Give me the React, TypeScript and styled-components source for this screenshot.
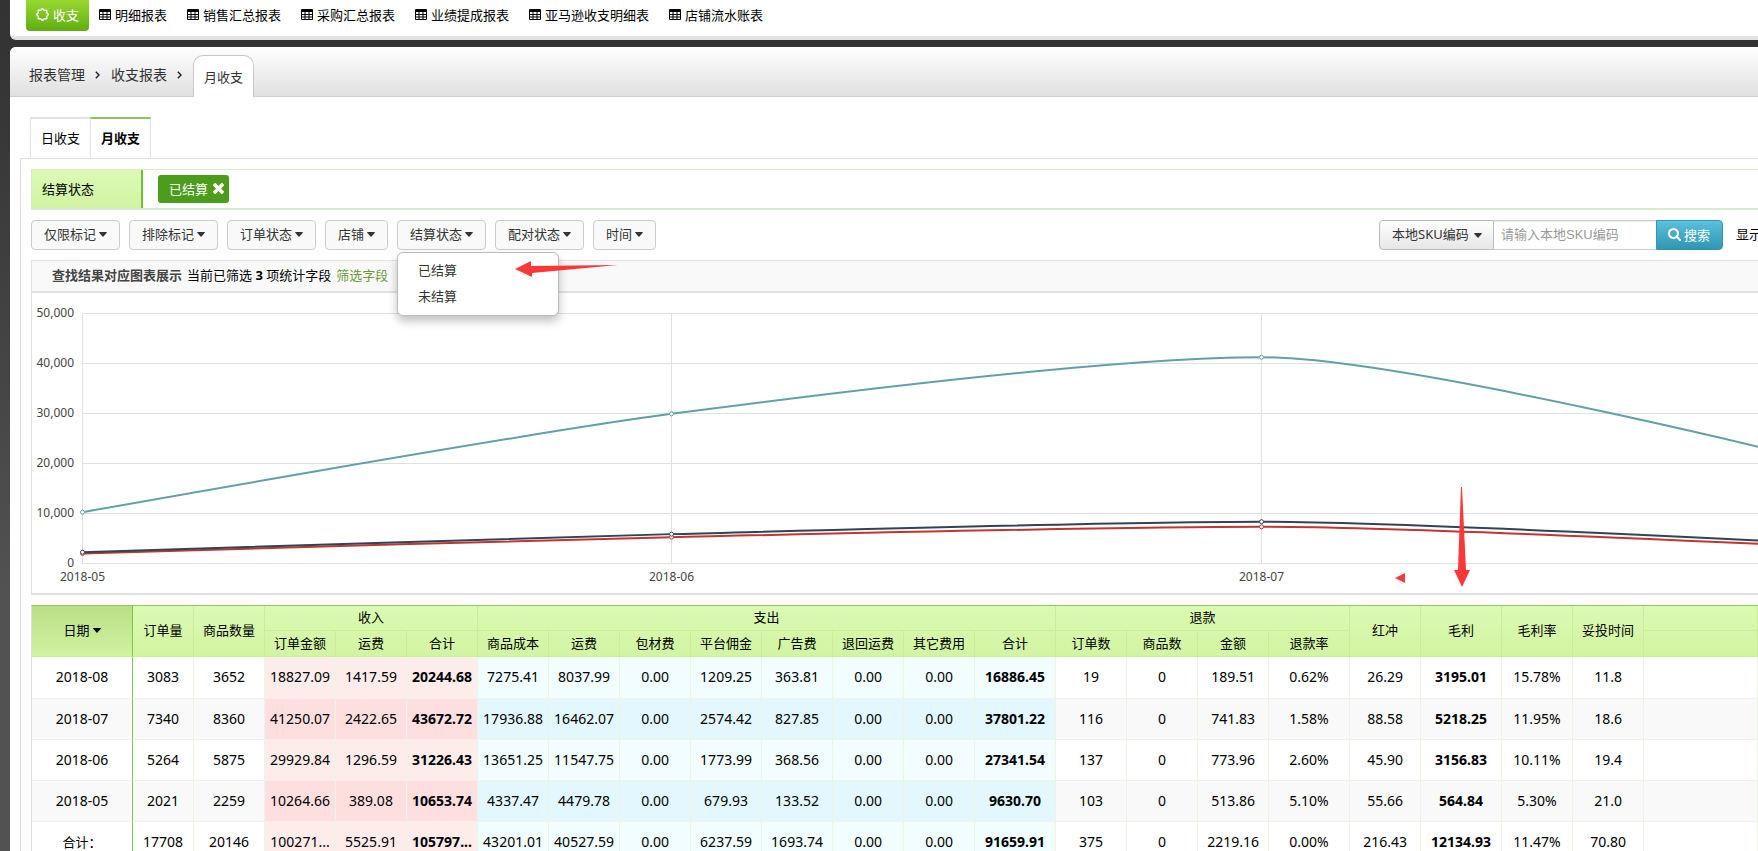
import React from 'react';
import styled, { createGlobalStyle, css } from 'styled-components';

const GlobalStyle = createGlobalStyle`
  * { box-sizing: border-box; }
  body {
    margin: 0;
    overflow: hidden;
    color: #000;
    font: 13px/20px "Noto Sans", "Noto Sans CJK SC", sans-serif;
  }
  a { color: inherit; text-decoration: none; }
  button, input, select { font: inherit; color: inherit; margin: 0; }
`;

const Page = styled.div`
  display: flex;
  flex-direction: column;
  gap: 7px;
  height: 100vh;
  padding-left: 10px;
  overflow: hidden;
  background: linear-gradient(#333 0, #353535 80px, #525252 600px);
`;

const TopBar = styled.nav`
  display: flex;
  flex: none;
  align-items: flex-start;
  gap: 20px;
  height: 40px;
  padding-left: 16px;
  background: #fff;
  border-bottom: 4px solid #e2e2e2;
  border-bottom-left-radius: 6px;
`;

const NavMain = styled.a`
  display: flex;
  align-items: center;
  gap: 4px;
  height: 31px;
  margin-right: -10px;
  padding: 0 10px 2px;
  color: #fff;
  background: linear-gradient(#98d830, #5fae14);
  border-radius: 0 0 4px 4px;
`;

const NavItem = styled.a`
  display: flex;
  align-items: center;
  gap: 4px;
  height: 29px;
  white-space: nowrap;
`;

const Panel = styled.main`
  display: flex;
  flex: 1;
  flex-direction: column;
  min-height: 0;
  background: #fff;
  border-top-left-radius: 6px;
`;

const Crumbs = styled.nav`
  display: flex;
  flex: none;
  align-items: flex-end;
  height: 50px;
  padding-left: 19px;
  color: #333;
  background: linear-gradient(#fff, #e0e0e0);
  border-bottom: 1px solid #d0d0d0;
  border-top-left-radius: 6px;
`;

const Crumb = styled.a`
  display: flex;
  align-items: center;
  gap: 10px;
  height: 42px;
  margin-right: 11px;
  font-size: 14px;
`;

const CurrentCrumb = styled.span`
  height: 42px;
  margin-bottom: -1px;
  padding: 0 10px;
  line-height: 43px;
  background: #fff;
  border: 1px solid #c8c8c8;
  border-bottom: 0;
  border-radius: 10px 10px 0 0;
`;

const Tabs = styled.div`
  display: flex;
  flex: none;
  margin: 20px 0 -1px 20px;
`;

const Tab = styled.button<{ $active?: boolean }>`
  height: 42px;
  padding: 0 10px 2px;
  font-weight: ${p => (p.$active ? 700 : 400)};
  background: #fff;
  border: solid #e2e2e2;
  border-width: 2px ${p => (p.$active ? 1 : 0)}px ${p => (p.$active ? 0 : 1)}px 1px;
  border-top-color: ${p => (p.$active ? '#8fc45c' : '#e2e2e2')};
`;

const Content = styled.section`
  display: flex;
  flex: 1;
  flex-direction: column;
  gap: 10px;
  margin-left: 10px;
  padding: 10px 0 0 10px;
  border: solid #e0e0e0;
  border-width: 1px 0 0 1px;
`;

const Conditions = styled.div`
  display: flex;
  flex: none;
  align-items: stretch;
  height: 41px;
  border: solid #d9ebcb;
  border-width: 1px 0 2px 1px;
`;

const ConditionName = styled.span`
  width: 111px;
  padding-left: 10px;
  line-height: 38px;
  background: linear-gradient(#dcf9b4, #d1f4a3);
  border-right: 2px solid #6cc233;
`;

const Chip = styled.button`
  display: flex;
  align-self: center;
  align-items: center;
  gap: 5px;
  height: 28px;
  margin-left: 15px;
  padding: 0 5px 1px 11px;
  color: #fff;
  background: #4c9d1b;
  border: 0;
  border-radius: 3px;
`;

const Toolbar = styled.div`
  display: flex;
  flex: none;
  gap: 9px;
  height: 30px;
`;

const FilterWrap = styled.div`
  position: relative;
`;

const FilterButton = styled.button`
  display: flex;
  align-items: center;
  gap: 3px;
  height: 30px;
  padding: 0 12px 2px;
  color: #333;
  white-space: nowrap;
  background: #f9f9f9;
  border: 1px solid #ccc;
  border-radius: 4px;
`;

const Menu = styled.ul`
  position: absolute;
  top: 32px;
  left: 0;
  z-index: 2;
  width: 162px;
  margin: 0;
  padding: 5px 0;
  color: #333;
  list-style: none;
  background: #fff;
  border: 1px solid #bbb;
  border-radius: 6px;
  box-shadow: 0 5px 10px rgba(0, 0, 0, 0.25);
`;

const MenuLink = styled.a`
  display: block;
  padding: 2px 20px 4px;
`;

const MenuArrow = styled.svg`
  position: absolute;
  top: 40px;
  left: 118px;
  z-index: 3;
`;

const Search = styled.form`
  display: flex;
  margin-left: auto;
`;

const SelectWrap = styled.label`
  position: relative;
  display: flex;
  color: #333;
`;

const SelectField = styled.select`
  width: 115px;
  height: 30px;
  padding: 0 12px 2px;
  appearance: none;
  background: linear-gradient(#fff, #e6e6e6);
  border: 1px solid #bbb;
  border-radius: 4px 0 0 4px;
`;

const SelectCaret = styled.span`
  position: absolute;
  top: 0;
  right: 12px;
  display: flex;
  align-items: center;
  height: 30px;
  pointer-events: none;
`;

const SearchInput = styled.input`
  width: 162px;
  height: 30px;
  padding: 0 7px 1px;
  font-family: "Liberation Sans", "Noto Sans CJK SC", sans-serif;
  border: solid #ccc;
  border-width: 1px 0;
  box-shadow: inset 0 1px 1px rgba(0, 0, 0, 0.08);
  &::placeholder { color: #999; }
`;

const SearchButton = styled.button`
  display: flex;
  align-items: center;
  gap: 3px;
  width: 67px;
  height: 30px;
  padding: 0 11px 1px;
  color: #fff;
  white-space: nowrap;
  background: linear-gradient(#5bc0de, #2f96b4);
  border: 1px solid #2f96b4;
  border-radius: 0 4px 4px 0;
`;

const ShowLabel = styled.span`
  width: 22px;
  margin-left: 4px;
  line-height: 28px;
  white-space: nowrap;
`;

const ChartBox = styled.section`
  flex: none;
  border: solid #e0e0e0;
  border-width: 1px 0 2px 1px;
`;

const ChartTitle = styled.header`
  display: flex;
  gap: 5px;
  height: 32px;
  padding-left: 20px;
  line-height: 29px;
  background: #f9f9f9;
  border-bottom: 2px solid #e0e0e0;
`;

const ChartHeading = styled.h2`
  margin: 0;
  color: #444;
  font-size: 13px;
  font-weight: 700;
`;

const FieldLink = styled.a`
  color: #6b9a3a;
`;

const Plot = styled.svg`
  display: block;
  width: 100%;
  height: 300px;
  font-size: 12px;
`;

const TableBox = styled.div`
  flex: none;
  border: solid #ddd;
  border-width: 1px 0 0 1px;
  border-top-color: #8fc95c;
`;

const Table = styled.table`
  width: 100%;
  table-layout: fixed;
  border-collapse: separate;
  border-spacing: 0;
`;

const Col = styled.col<{ $w?: number }>`
  width: ${p => (p.$w ? `${p.$w}px` : 'auto')};
`;

const Head = styled.thead`
  background: linear-gradient(#dcfab2, #d1f4a2);
`;

const HeadRow = styled.tr<{ $h: number }>`
  height: ${p => p.$h}px;
`;

const Th = styled.th<{ $date?: boolean }>`
  padding: 0 0 2px;
  font-weight: 400;
  white-space: nowrap;
  border: solid #c8ee9a;
  border-width: 0 1px 1px 0;
  ${p =>
    p.$date &&
    css`
      background: linear-gradient(#b9df86, #d0f2a2);
      border-right-color: #86c24e;
    `}
`;

const SortButton = styled.button`
  display: inline-flex;
  align-items: center;
  gap: 3px;
  padding: 0;
  background: none;
  border: 0;
`;

type Tone = 'plain' | 'income' | 'cost';
const toneColors: Record<Tone, [string, string]> = {
  plain: ['#fff', '#f9f9f9'],
  income: ['#feeceb', '#fddfe0'],
  cost: ['#f1fdff', '#e2f8fe'],
};

const Row = styled.tr`
  height: 41px;
  &:first-child { height: 42px; }
`;

const Td = styled.td<{ $tone: Tone; $odd: boolean; $bold?: boolean; $date?: boolean; $last?: boolean }>`
  padding: 0 0 1px;
  overflow: hidden;
  font-size: ${p => (p.$last && p.$date ? 13 : 14)}px;
  font-weight: ${p => (p.$bold ? 700 : 400)};
  text-align: center;
  white-space: nowrap;
  background: ${p => toneColors[p.$tone][p.$odd ? 1 : 0]};
  border: solid #eef4e3;
  border-width: 0 1px 1px 0;
  ${p => p.$date && css`border-right-color: #86c24e;`}
`;

const Caret = () => (
  <svg width="8" height="5" viewBox="0 0 8 5" aria-hidden="true">
    <path d="M.6 0h6.8q.6.1.4.8L4.5 4.6q-.5.4-1 0L.2.8Q0 .1.6 0z" fill="currentColor" />
  </svg>
);

const GridIcon = () => (
  <svg width="12" height="11" viewBox="0 0 12 11" aria-hidden="true">
    <path
      fillRule="evenodd"
      fill="currentColor"
      d="M1 0h10q1 0 1 1v9q0 1-1 1H1q-1 0-1-1V1q0-1 1-1zM1 3v2h2.500V3zM4.500 3v2h3V3zM8.500 3v2H11V3zM1 6v1.500h2.500V6zM4.500 6v1.500h3V6zM8.500 6v1.500H11V6zM1 8.500V10h2.500V8.500zM4.500 8.500V10h3V8.500zM8.500 8.500V10H11V8.500z"
    />
  </svg>
);

const starPoints = Array.from({ length: 16 }, (_, i) => {
  const r = i % 2 ? 4.6 : 6.1;
  const a = (i * Math.PI) / 8 - Math.PI / 2;
  return `${6.5 + r * Math.cos(a)},${6.5 + r * Math.sin(a)}`;
}).join(' ');

const SunIcon = () => (
  <svg width="13" height="13" viewBox="0 0 13 13" aria-hidden="true">
    <polygon points={starPoints} fill="none" stroke="currentColor" strokeWidth="1.3" strokeLinejoin="round" />
  </svg>
);

const CloseIcon = () => (
  <svg width="11" height="11" viewBox="302 366 1188 1188" aria-hidden="true">
    <path
      fill="currentColor"
      d="M1490 1322q0 40-28 68l-136 136q-28 28-68 28t-68-28l-294-294-294 294q-28 28-68 28t-68-28l-136-136q-28-28-28-68t28-68l294-294-294-294q-28-28-28-68t28-68l136-136q28-28 68-28t68 28l294 294 294-294q28-28 68-28t68 28l136 136q28 28 28 68t-28 68l-294 294 294 294q28 28 28 68z"
    />
  </svg>
);

const SearchIcon = () => (
  <svg width="13" height="13" viewBox="64 128 1664 1664" aria-hidden="true">
    <path
      fill="currentColor"
      d="M1216 832q0-185-131.500-316.500t-316.500-131.500-316.500 131.500-131.500 316.500 131.500 316.500 316.500 131.500 316.500-131.500 131.500-316.500zm512 832q0 52-38 90t-90 38q-54 0-90-38l-343-342q-179 124-399 124-143 0-273.500-55.500t-225-150-150-225-55.500-273.500 55.500-273.500 150-225 225-150 273.500-55.500 273.500 55.500 225 150 150 225 55.500 273.500q0 220-124 399l343 343q37 37 37 90z"
    />
  </svg>
);

const Chevron = () => (
  <svg width="5" height="8" viewBox="0 0 5 8" aria-hidden="true">
    <path d="M.8.700L4 4 .8 7.300" fill="none" stroke="#222" strokeWidth="1.400" />
  </svg>
);

const navItems = ['明细报表', '销售汇总报表', '采购汇总报表', '业绩提成报表', '亚马逊收支明细表', '店铺流水账表'];
const filters = ['仅限标记', '排除标记', '订单状态', '店铺', '结算状态', '配对状态', '时间'];

const months = ['2018-05', '2018-06', '2018-07'];
const series = [
  { color: '#c23531', values: [2021, 5264, 7340, 3083] },
  { color: '#2f4554', values: [2259, 5875, 8360, 3652] },
  { color: '#61a0a8', values: [10264.66, 29929.84, 41250.07, 18827.09] },
];
const xAt = (i: number) => Math.floor(50 + i * 589.5) + 0.5;
const yAt = (v: number) => 270.5 - v / 200;

/* Cubic segments whose tangents are flat at each series' own extremes. */
function smoothPath(values: number[]) {
  const n = values.length;
  const pts = values.map((v, i) => [xAt(i), yAt(v)]);
  const reach = 147;
  const slope = pts.map((p, i) => {
    if (i === 0 || i === n - 1) return 0;
    const a = pts[i - 1][1];
    const b = pts[i + 1][1];
    return (p[1] - a) * (b - p[1]) > 0 ? (b - a) / 8 : 0;
  });
  let d = `M${pts[0][0]} ${pts[0][1]}`;
  for (let i = 1; i < n; i++) {
    const [x0, y0] = pts[i - 1];
    const [x1, y1] = pts[i];
    const c0 = i === 1 ? x0 : x0 + reach;
    const c1 = i === n - 1 ? x1 : x1 - reach;
    d += `C${c0} ${y0 + slope[i - 1]} ${c1} ${y1 - slope[i]} ${x1} ${y1}`;
  }
  return d;
}

const Chart = () => (
  <Plot role="img" aria-label="月收支图表">
    {[0, 10000, 20000, 30000, 40000, 50000].map(v => (
      <g key={v}>
        <line x1="50" x2="100%" y1={yAt(v)} y2={yAt(v)} stroke="#e0e0e0" />
        <text x="42" y={yAt(v) + 3} textAnchor="end" fill="#444">
          {v.toLocaleString('en-US')}
        </text>
      </g>
    ))}
    {months.map((m, i) => (
      <g key={m}>
        <line x1={xAt(i)} x2={xAt(i)} y1="20" y2="271" stroke="#e0e0e0" />
        <text x={xAt(i)} y="288" textAnchor="middle" fill="#444">
          {m}
        </text>
      </g>
    ))}
    {series.map(s => (
      <g key={s.color} stroke={s.color}>
        <path d={smoothPath(s.values)} fill="none" strokeWidth="2" />
        {s.values.map((v, i) => (
          <circle key={i} cx={xAt(i)} cy={yAt(v)} r="2" fill="#fff" />
        ))}
      </g>
    ))}
    <g fill="#fb3737">
      <path d="M1429 194l1 0 4 83h4l-8 17-8-17h4z" />
      <path d="M1363 285l10-5v10z" />
    </g>
  </Plot>
);

const colWidths = [101, 61, 71, 71, 71, 71, 71, 71, 71, 71, 71, 71, 71, 81, 71, 71, 71, 81, 71, 81, 71, 71];
const subHeads = [
  '订单金额', '运费', '合计',
  '商品成本', '运费', '包材费', '平台佣金', '广告费', '退回运费', '其它费用', '合计',
  '订单数', '商品数', '金额', '退款率',
];
const rows = [
  '2018-08 3083 3652 18827.09 1417.59 20244.68 7275.41 8037.99 0.00 1209.25 363.81 0.00 0.00 16886.45 19 0 189.51 0.62% 26.29 3195.01 15.78% 11.8',
  '2018-07 7340 8360 41250.07 2422.65 43672.72 17936.88 16462.07 0.00 2574.42 827.85 0.00 0.00 37801.22 116 0 741.83 1.58% 88.58 5218.25 11.95% 18.6',
  '2018-06 5264 5875 29929.84 1296.59 31226.43 13651.25 11547.75 0.00 1773.99 368.56 0.00 0.00 27341.54 137 0 773.96 2.60% 45.90 3156.83 10.11% 19.4',
  '2018-05 2021 2259 10264.66 389.08 10653.74 4337.47 4479.78 0.00 679.93 133.52 0.00 0.00 9630.70 103 0 513.86 5.10% 55.66 564.84 5.30% 21.0',
  '合计： 17708 20146 100271... 5525.91 105797... 43201.01 40527.59 0.00 6237.59 1693.74 0.00 0.00 91659.91 375 0 2219.16 0.00% 216.43 12134.93 11.47% 70.80',
].map(r => r.split(' '));
const boldCols = [5, 13, 19];
const toneOf = (c: number): Tone => (c >= 3 && c <= 5 ? 'income' : c >= 6 && c <= 13 ? 'cost' : 'plain');

const ReportTable = () => (
  <TableBox>
    <Table>
      <colgroup>
        {colWidths.map((w, i) => (
          <Col key={i} $w={w} />
        ))}
        <Col />
      </colgroup>
      <Head>
        <HeadRow $h={25}>
          <Th rowSpan={2} $date>
            <SortButton type="button">
              日期
              <Caret />
            </SortButton>
          </Th>
          <Th rowSpan={2}>订单量</Th>
          <Th rowSpan={2}>商品数量</Th>
          <Th colSpan={3}>收入</Th>
          <Th colSpan={8}>支出</Th>
          <Th colSpan={4}>退款</Th>
          <Th rowSpan={2}>红冲</Th>
          <Th rowSpan={2}>毛利</Th>
          <Th rowSpan={2}>毛利率</Th>
          <Th rowSpan={2}>妥投时间</Th>
          <Th />
        </HeadRow>
        <HeadRow $h={26}>
          {subHeads.map((h, i) => (
            <Th key={i}>{h}</Th>
          ))}
          <Th />
        </HeadRow>
      </Head>
      <tbody>
        {rows.map((r, ri) => (
          <Row key={r[0]}>
            {r.map((v, c) => (
              <Td
                key={c}
                $tone={toneOf(c)}
                $odd={ri % 2 === 1}
                $bold={boldCols.includes(c)}
                $date={c === 0}
                $last={ri === rows.length - 1}
              >
                {v}
              </Td>
            ))}
            <Td $tone="plain" $odd={ri % 2 === 1} />
          </Row>
        ))}
      </tbody>
    </Table>
  </TableBox>
);

export default function App() {
  return (
    <>
      <GlobalStyle />
      <Page>
        <TopBar>
          <NavMain href="#balance">
            <SunIcon />
            收支
          </NavMain>
          {navItems.map(n => (
            <NavItem key={n} href="#report">
              <GridIcon />
              {n}
            </NavItem>
          ))}
        </TopBar>
        <Panel>
          <Crumbs>
            {['报表管理', '收支报表'].map(c => (
              <Crumb key={c} href="#crumb">
                {c}
                <Chevron />
              </Crumb>
            ))}
            <CurrentCrumb>月收支</CurrentCrumb>
          </Crumbs>
          <Tabs>
            <Tab type="button">日收支</Tab>
            <Tab type="button" $active>
              月收支
            </Tab>
          </Tabs>
          <Content>
            <Conditions>
              <ConditionName>结算状态</ConditionName>
              <Chip type="button">
                已结算
                <CloseIcon />
              </Chip>
            </Conditions>
            <Toolbar>
              {filters.map(f => (
                <FilterWrap key={f}>
                  <FilterButton type="button" aria-haspopup="menu">
                    {f}
                    <Caret />
                  </FilterButton>
                  {f === '结算状态' && (
                    <>
                      <Menu>
                        <li>
                          <MenuLink href="#settled">已结算</MenuLink>
                        </li>
                        <li>
                          <MenuLink href="#unsettled">未结算</MenuLink>
                        </li>
                      </Menu>
                      <MenuArrow width="104" height="18" viewBox="0 0 104 18" aria-hidden="true">
                        <path d="M0 9L16 1v5l87-1L17 13v4z" fill="#fb3737" />
                      </MenuArrow>
                    </>
                  )}
                </FilterWrap>
              ))}
              <Search>
                <SelectWrap>
                  <SelectField aria-label="搜索类型">
                    <option>本地SKU编码</option>
                  </SelectField>
                  <SelectCaret>
                    <Caret />
                  </SelectCaret>
                </SelectWrap>
                <SearchInput aria-label="搜索" placeholder="请输入本地SKU编码" />
                <SearchButton type="button">
                  <SearchIcon />
                  搜索
                </SearchButton>
              </Search>
              <ShowLabel>显示</ShowLabel>
            </Toolbar>
            <ChartBox>
              <ChartTitle>
                <ChartHeading>查找结果对应图表展示</ChartHeading>
                <span>
                  当前已筛选 <b>3</b> 项统计字段
                </span>
                <FieldLink href="#fields">筛选字段</FieldLink>
              </ChartTitle>
              <Chart />
            </ChartBox>
            <ReportTable />
          </Content>
        </Panel>
      </Page>
    </>
  );
}
